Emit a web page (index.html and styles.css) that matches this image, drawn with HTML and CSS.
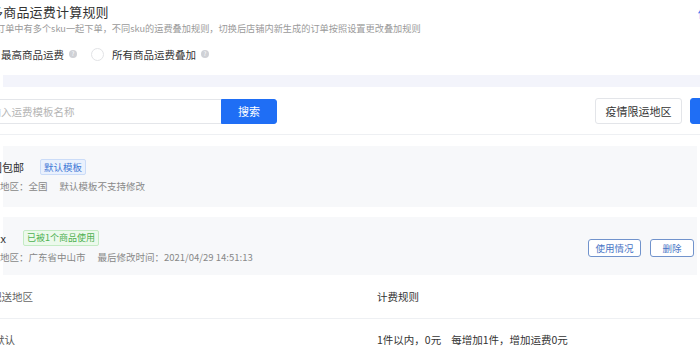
FILE: index.html
```html
<!DOCTYPE html>
<html lang="zh-CN">
<head>
<meta charset="utf-8">
<title>运费模板</title>
<link rel="stylesheet" href="styles.css">
</head>
<body>
<div class="page">
  <section class="rule">
    <div class="rule-head">
      <h2 class="rule-title">多商品运费计算规则</h2>
      <a class="rule-link">使用帮助</a>
    </div>
    <p class="rule-desc">订单中有多个sku一起下单，不同sku的运费叠加规则，切换后店铺内新生成的订单按照设置更改叠加规则</p>
    <div class="radios">
      <label class="radio is-checked"><span class="radio-dot"></span>最高商品运费<i class="help">?</i></label>
      <label class="radio"><span class="radio-dot"></span>所有商品运费叠加<i class="help">?</i></label>
    </div>
  </section>

  <div class="band"></div>

  <div class="toolbar">
    <div class="search">
      <input class="search-input" type="text" placeholder="请输入运费模板名称">
      <button class="btn btn-primary search-btn">搜索</button>
    </div>
    <div class="actions">
      <button class="btn btn-ghost">疫情限运地区</button>
      <button class="btn btn-primary btn-new">新建运费模板</button>
    </div>
  </div>

  <div class="list">
    <div class="card">
      <div class="card-info">
        <div class="card-name"><span class="name name-1">全国包邮</span><span class="tag tag-blue">默认模板</span></div>
        <div class="card-meta">配送地区：全国<span class="meta-gap"></span>默认模板不支持修改</div>
      </div>
    </div>
    <div class="card card-used">
      <div class="card-info">
        <div class="card-name"><span class="name name-2">xx</span><span class="tag tag-green">已被1个商品使用</span></div>
        <div class="card-meta">配送地区：广东省中山市<span class="meta-gap"></span>最后修改时间：2021/04/29 14:51:13</div>
      </div>
      <div class="card-ops">
        <button class="btn btn-line">使用情况</button>
        <button class="btn btn-line btn-del">删除</button>
      </div>
    </div>
  </div>

  <div class="table">
    <div class="tr th">
      <div class="td td-area"><span class="cut-area">配送地区</span></div>
      <div class="td td-rule">计费规则</div>
    </div>
    <div class="tr">
      <div class="td td-area"><span class="cut-def">默认</span></div>
      <div class="td td-rule">1件以内，0元<span class="rule-gap"></span>每增加1件，增加运费0元</div>
    </div>
  </div>
</div>
</body>
</html>
```

FILE: styles.css
```css
* { box-sizing: border-box; }
html, body { margin: 0; padding: 0; background: #fff; }
body {
  width: 700px;
  height: 351px;
  overflow: hidden;
  font-family: "Noto Sans CJK SC", "Noto Sans", sans-serif;
  color: #333;
}
.page { width: 700px; }

/* rule section */
.rule { padding-top: 3px; }
.rule-head {
  display: flex;
  justify-content: space-between;
  align-items: center;
  height: 18px;
}
.rule-title {
  margin: 0 0 0 -10px;
  font-size: 13px;
  line-height: 18px;
  font-weight: 400;
  color: #333;
  letter-spacing: 0.2px;
}
.rule-link {
  font-size: 11px;
  color: #2a6ff0;
  margin-right: -42px;
  margin-top: 2px;
}
.rule-desc {
  margin: 0 0 0 -4px;
  font-size: 9.2px;
  line-height: 14px;
  color: #9a9a9a;
}
.radios {
  display: flex;
  align-items: center;
  height: 18px;
  margin: 10px 0 0 -20px;
  gap: 14px;
  font-size: 10.5px;
  color: #333;
}
.radio { display: flex; align-items: center; }
.radio-dot {
  width: 13px;
  height: 13px;
  border: 1px solid #e2e3e6;
  border-radius: 50%;
  margin-right: 8px;
  background: #fff;
}
.radio.is-checked .radio-dot { border: 4px solid #1d6ff7; }
.help {
  display: inline-flex;
  align-items: center;
  justify-content: center;
  width: 8px;
  height: 8px;
  border-radius: 50%;
  background: #cfd1d6;
  color: #fff;
  font-size: 6px;
  font-style: normal;
  margin-left: 5px;
  line-height: 1;
}

.band {
  height: 12px;
  margin: 12px 0 0 3px;
  background: #f3f4fb;
}

/* toolbar */
.toolbar {
  display: flex;
  justify-content: space-between;
  align-items: center;
  margin-top: 11px;
  height: 26px;
}
.search { display: flex; align-items: center; }
.search-input {
  width: 281px;
  height: 25px;
  margin-left: -60px;
  padding: 0 0 0 39px;
  border: 1px solid #e4e6ea;
  border-right: 0;
  font-family: inherit;
  font-size: 10.5px;
  color: #333;
  outline: none;
}
.search-input::placeholder { color: #b4b4b4; }
.btn {
  font-family: inherit;
  cursor: pointer;
  border-radius: 3px;
  padding: 0;
}
.btn-primary {
  background: #1f6ef5;
  border: 1px solid #1f6ef5;
  color: #fff;
}
.search-btn {
  width: 56px;
  height: 25px;
  font-size: 11px;
  border-radius: 0 3px 3px 0;
}
.actions { display: flex; align-items: center; gap: 8px; margin-right: -82px; }
.btn-ghost {
  width: 87px;
  height: 26px;
  background: #fff;
  border: 1px solid #e3e5e9;
  color: #333;
  font-size: 11px;
}
.btn-new { width: 92px; height: 26px; font-size: 11px; }

/* list */
.list {
  border-top: 1px solid #eef0f3;
  margin-top: 10px;
  padding-top: 11px;
}
.card {
  display: flex;
  align-items: center;
  justify-content: space-between;
  margin: 0 3px 10px 3px;
  background: #f7f8fa;
  padding: 12px 3px 13px 0;
}
.card-used { padding: 12px 3px 10px 0; margin-bottom: 0; }
.card-name {
  display: flex;
  align-items: center;
  height: 18px;
  font-size: 11px;
  color: #333;
}
.name { flex: none; }
.name-1 { margin-left: -23px; width: 60px; }
.name-2 { margin-left: -8px; width: 28px; }
.tag {
  display: inline-block;
  font-size: 9px;
  line-height: 14px;
  padding: 0 3px;
  border-radius: 2px;
}
.tag-blue { color: #3f78d6; background: #eaf1fd; border: 1px solid #cbdcf8; font-size: 9.5px; }
.tag-green { color: #4cb050; background: #ecf9ec; border: 1px solid #c4ebc4; }
.card-meta {
  margin: 2px 0 0 -22px;
  font-size: 9.5px;
  line-height: 16px;
  color: #888;
}
.meta-gap { display: inline-block; width: 12px; }
.card-ops { display: flex; gap: 9px; padding-top: 2px; }
.btn-line {
  height: 18px;
  width: 53px;
  background: #fff;
  border: 1px solid #7193cc;
  color: #4a76c6;
  font-size: 9.5px;
}
.btn-del { width: 44px; }

/* table */
.tr {
  display: flex;
  align-items: center;
  font-size: 10.5px;
  color: #555;
}
.th {
  height: 44px;
  border-bottom: 1px solid #eef0f3;
  color: #666;
}
.tr + .tr { height: 40px; }
.td-area { width: 377px; }
.cut-area { display: inline-block; margin-left: -9px; }
.cut-def { display: inline-block; margin-left: -6px; }
.td-rule { color: #333; }
.rule-gap { display: inline-block; width: 10px; }
```
